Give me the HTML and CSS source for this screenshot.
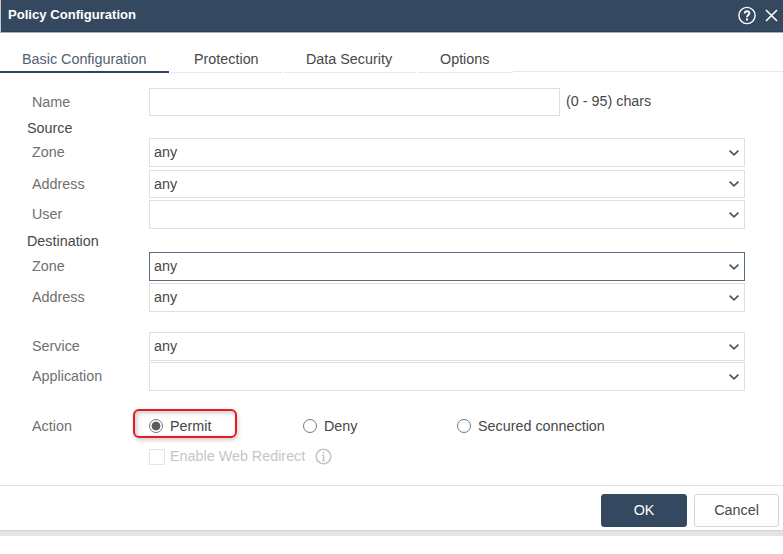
FILE: index.html
```html
<!DOCTYPE html>
<html lang="en">
<head>
<meta charset="utf-8">
<title>Policy Configuration</title>
<link rel="stylesheet" href="styles.css">
</head>
<body>
<svg class="defs" width="0" height="0"><symbol id="chevron" viewBox="0 0 12 8"><path d="M1.6 1.6 L6 5.8 L10.4 1.6" fill="none" stroke="#465970" stroke-width="1.8"/></symbol></svg>
<div class="dialog">
<header class="titlebar"><h1>Policy Configuration</h1>
<svg class="help" width="18" height="19" viewBox="0 0 18 18" fill="none" stroke="#fff"><circle cx="9" cy="9" r="8.1" stroke-width="1.4"/><path d="M6.7 7.1C6.7 3.9 11.5 4 11.3 6.9C11.2 8.5 9 8.6 9 10.7" stroke-width="1.9"/><path d="M9 12v2" stroke-width="2"/></svg>
<svg class="close" width="13" height="13" viewBox="0 0 13 13"><path d="M1 1L12 12M12 1L1 12" stroke="#fff" stroke-width="1.6"/></svg>
</header>
<nav class="tabs"><a class="tab active"><span>Basic Configuration</span></a><a class="tab"><span>Protection</span></a><a class="tab data"><span>Data Security</span></a><a class="tab options"><span>Options</span></a><i class="rest"></i></nav>
<main class="form">
<div class="row name"><label>Name</label><div class="field short"></div><span class="hint">(0 - 95) chars</span></div>
<h2 class="source">Source</h2>
<div class="row tall"><label>Zone</label><div class="field"><span>any</span><svg><use href="#chevron"/></svg></div></div>
<div class="row gap3"><label>Address</label><div class="field"><span>any</span><svg><use href="#chevron"/></svg></div></div>
<div class="row tall gap2"><label>User</label><div class="field"><span></span><svg><use href="#chevron"/></svg></div></div>
<h2 class="destination">Destination</h2>
<div class="row tall"><label>Zone</label><div class="field focus"><span>any</span><svg><use href="#chevron"/></svg></div></div>
<div class="row tall gap2"><label class="lower">Address</label><div class="field"><span>any</span><svg><use href="#chevron"/></svg></div></div>
<div class="row tall service"><label>Service</label><div class="field"><span>any</span><svg><use href="#chevron"/></svg></div></div>
<div class="row tall gap1"><label class="lower">Application</label><div class="field"><span></span><svg><use href="#chevron"/></svg></div></div>
<div class="row actions"><label>Action</label>
<div class="choice permit"><i class="radio on"></i><span>Permit</span></div><div class="choice deny"><i class="radio"></i><span>Deny</span></div><div class="choice"><i class="radio"></i><span>Secured connection</span></div></div>
<div class="redirect"><i class="check"></i><span>Enable Web Redirect</span><svg width="17" height="17" viewBox="0 0 17 17" fill="none" stroke="#c6c6c6"><circle cx="8.5" cy="8.5" r="7.3" stroke-width="1.6"/><path d="M8.5 3.8v1.8M7 7.2h1.5v5M7 12.5h3" stroke-width="1.4"/></svg></div>
</main>
<footer class="footer"><button class="ok">OK</button><button>Cancel</button></footer>
</div>
</body>
</html>
```
FILE: styles.css
```css
*{box-sizing:border-box}
body{margin:0;background:#fff;font:14.35px/20px "Liberation Sans",Arial,sans-serif;color:#484848}
.defs{display:block}
.dialog{width:783px;height:536px;display:flex;flex-direction:column;border-bottom:5px solid #e3e3e3}
.titlebar{height:33px;flex:none;display:flex;align-items:center;background:#34495f;border-left:1px solid #c3cbd3;border-bottom:1px solid #a4aebb;box-shadow:inset 0 -1px #2a4058;padding:0 5px 1px 7px;color:#fff}
h1{font-size:13.1px;line-height:20px;margin:-2px 0 0;flex:1}
.help{margin-right:9px}
.tabs{height:40px;flex:none;display:flex}
.tab{width:111px;margin-left:2px;padding:16px 0 0 23px;border-bottom:1px solid #e8e8e8;white-space:nowrap}
.tab.active{width:169px;margin:0;padding-left:22px;border-bottom:2px solid #2c435b;color:#536171}
.tab.data{width:132px;padding-left:22px}
.tab.options{width:95px;padding-left:22px}
.rest{flex:1;height:39px;border-bottom:1px solid #e8e8e8}
.form{flex:1}
.row{display:flex;align-items:center;height:28px}
.row.tall{height:29px}
.row.name{margin-top:15px}
.row.gap1{margin-top:1px}
.row.gap2{margin-top:2px}
.row.gap3{margin-top:3px}
.row.service{margin-top:20px}
label{width:149px;padding-left:32px;color:#707070;flex:none}
.tall label:not(.lower),.tall .field span{margin-top:-2px}
.tall .lower{margin-top:-1px}
.field{width:596px;height:100%;border:1px solid #dfdfdf;padding:0 4px;display:flex;align-items:center;justify-content:space-between}
.field svg{width:12px;height:8px}
.field.focus{border-color:#596b83}
.field.short{width:411px}
.hint{margin:-2px 0 0 6px}
h2{font-size:14.35px;line-height:20px;font-weight:400;margin:0 0 0 27px;height:22px;padding-top:2px}
h2.destination{height:23px}
.actions{margin-top:18px;height:29px}
.actions label,.choice.deny,.choice.deny + .choice{padding-top:4px}
.choice{display:flex;align-items:center;width:154px;gap:7px;white-space:nowrap}
.choice.permit{width:104px;height:29px;margin-left:-16px;margin-right:66px;padding:4px 0 0 14px;border:2px solid #e91821;border-radius:6px;box-shadow:1px 2px 4px #ccc,inset 2px 2px 5px #ccc}
.radio{width:14px;height:14px;border:1.5px solid #777;border-radius:50%;flex:none}
.radio.on{background:radial-gradient(circle,#5c5c5c 0 4px,transparent 4.8px)}
.redirect{display:flex;align-items:center;height:20px;margin:8px 0 0 149px;color:#c6c6c6}
.check{width:16px;height:16px;border:1px solid #e5e5e5;margin:2px 5px 0 0}
.redirect svg{margin-left:10px}
.footer{height:46px;flex:none;border-top:1px solid #e2e2e2;border-bottom:1px solid #d4d4d4;display:flex;justify-content:flex-end;gap:7px;padding:8px 4px 0 0}
button{width:86px;height:33px;border:1px solid #d6d6d6;border-radius:3px;background:#fff;color:#484848;font:14.35px/20px "Liberation Sans",Arial,sans-serif;padding:0 0 2px}
button:last-child{width:85px}
button.ok{background:#34495f;border-color:#34495f;color:#fff}
```
